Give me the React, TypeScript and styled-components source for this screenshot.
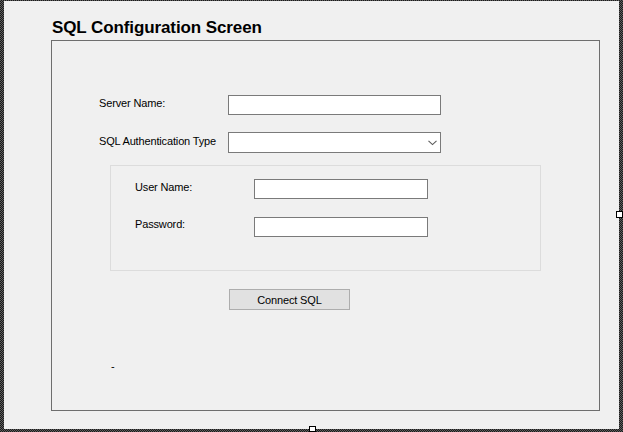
import React from "react";
import styled, { createGlobalStyle } from "styled-components";

const GlobalStyle = createGlobalStyle`
    html, body {
        margin: 0;
        padding: 0;
        background: #1e1e1e;
    }
    * {
        box-sizing: border-box;
    }
`;

// designer selection frame round the form
const Frame = styled.div`
    position: relative;
    width: 623px;
    height: 432px;
    padding: 1px 4px 3px 4px;
    background-color: #1e1e1e;
    background-image: repeating-conic-gradient(#1a1a1a 0 25%, #5e5e5e 0 50%);
    background-size: 2px 2px;
`;

const Handle = styled.div<{ $side: "right" | "bottom" }>`
    position: absolute;
    width: 7px;
    height: 7px;
    background: #ffffff;
    border: 1px solid #000000;
    ${(p) =>
        p.$side === "right"
            ? "right: 0; top: 211px;"
            : "bottom: 0; left: 309px; height: 6px;"}
`;

const Form = styled.div`
    width: 100%;
    height: 100%;
    background: #f0f0f0;
    padding: 17px 0 0 47px;
    display: flex;
    flex-direction: column;
    font-family: "Liberation Sans", Arial, sans-serif;
    color: #000;
`;

const Title = styled.h1`
    margin: 0 0 2px 1px;
    font-size: 17px;
    line-height: 20px;
    font-weight: bold;
    letter-spacing: -0.1px;
`;

const GroupBox = styled.div`
    width: 549px;
    height: 371px;
    border: 1px solid #6e6e6e;
    padding: 54px 0 0 47px;
    display: flex;
    flex-direction: column;
`;

const Row = styled.div<{ $labelWidth: number; $gap?: number }>`
    display: grid;
    grid-template-columns: ${(p) => p.$labelWidth}px auto;
    align-items: start;
    margin-bottom: ${(p) => p.$gap ?? 0}px;
`;

const Label = styled.label<{ $offset?: number }>`
    font-size: 11px;
    line-height: 13px;
    letter-spacing: -0.15px;
    padding-top: ${(p) => p.$offset ?? 2}px;
    white-space: nowrap;
`;

const TextBox = styled.input<{ $width: number }>`
    width: ${(p) => p.$width}px;
    height: 20px;
    margin: 0;
    padding: 0 3px;
    border: 1px solid #7a7a7a;
    background: #ffffff;
    font-family: inherit;
    font-size: 11px;
    outline: none;
`;

const Combo = styled.div`
    width: 213px;
    height: 21px;
    border: 1px solid #7a7a7a;
    background: #ffffff;
    display: flex;
    align-items: center;
    justify-content: flex-end;
    padding-right: 3px;
`;

const InnerBox = styled.div`
    width: 431px;
    height: 106px;
    margin: 12px 0 0 11px;
    border: 1px solid #dcdcdc;
    padding: 13px 0 0 24px;
    display: flex;
    flex-direction: column;
`;

const Button = styled.button`
    width: 121px;
    height: 21px;
    margin: 18px 0 0 130px;
    padding: 0;
    border: 1px solid #adadad;
    background: #e1e1e1;
    font-family: inherit;
    font-size: 11px;
    letter-spacing: -0.15px;
    color: #000;
`;

const Status = styled.div`
    margin: 50px 0 0 12px;
    font-size: 11px;
    line-height: 13px;
`;

const Chevron = () => (
    <svg width="9" height="6" viewBox="0 0 9 6">
        <polyline points="0.5,0.8 4.5,4.6 8.5,0.8" fill="none" stroke="#5a5a5a" strokeWidth="1.1" />
    </svg>
);

export default function App() {
    return (
        <>
            <GlobalStyle />
            <Frame>
                <Form>
                    <Title>SQL Configuration Screen</Title>
                    <GroupBox>
                        <Row $labelWidth={129} $gap={17}>
                            <Label $offset={2}>Server Name:</Label>
                            <TextBox $width={213} />
                        </Row>
                        <Row $labelWidth={129}>
                            <Label $offset={3}>SQL Authentication Type</Label>
                            <Combo>
                                <Chevron />
                            </Combo>
                        </Row>
                        <InnerBox>
                            <Row $labelWidth={119} $gap={18}>
                                <Label $offset={2}>User Name:</Label>
                                <TextBox $width={174} />
                            </Row>
                            <Row $labelWidth={119}>
                                <Label $offset={1}>Password:</Label>
                                <TextBox $width={174} type="password" />
                            </Row>
                        </InnerBox>
                        <Button>Connect SQL</Button>
                        <Status>-</Status>
                    </GroupBox>
                </Form>
                <Handle $side="right" />
                <Handle $side="bottom" />
            </Frame>
        </>
    );
}
